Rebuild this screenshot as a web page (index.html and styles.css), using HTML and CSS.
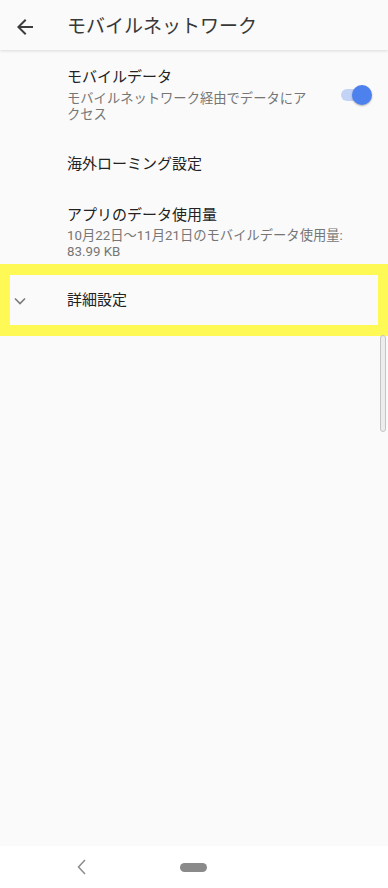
FILE: index.html
```html
<!DOCTYPE html>
<html lang="ja">
<head>
<meta charset="utf-8">
<title>モバイルネットワーク</title>
<link rel="stylesheet" href="styles.css">
</head>
<body>
<div class="screen">
  <header class="appbar">
    <svg class="back" width="24" height="24" viewBox="0 0 24 24" aria-hidden="true"><path d="M20 11H7.83l5.59-5.59L12 4l-8 8 8 8 1.41-1.41L7.83 13H20v-2z"/></svg>
    <h1 class="appbar-title">モバイルネットワーク</h1>
  </header>
  <main class="content">
    <div class="item item-switch">
      <div class="text text-narrow">
        <div class="title">モバイルデータ</div>
        <div class="summary">モバイルネットワーク経由でデータにアクセス</div>
      </div>
      <div class="switch"><span class="track"></span><span class="thumb"></span></div>
    </div>
    <div class="item item-single">
      <div class="title">海外ローミング設定</div>
    </div>
    <div class="item item-usage">
      <div class="text">
        <div class="title">アプリのデータ使用量</div>
        <div class="summary summary-usage">10月22日～11月21日のモバイルデータ使用量: 83.99 KB</div>
      </div>
    </div>
    <div class="highlight">
      <div class="item item-advanced">
        <svg class="chevron" width="12" height="8" viewBox="0 0 12 8" aria-hidden="true"><polyline points="1,1.5 6,6.5 11,1.5"/></svg>
        <div class="title">詳細設定</div>
      </div>
    </div>
    <div class="scrollbar"></div>
  </main>
  <nav class="navbar">
    <svg class="nav-back" width="10" height="16" viewBox="0 0 10 16" aria-hidden="true"><polyline points="8,1 1.5,8 8,15"/></svg>
    <span class="nav-home"></span>
  </nav>
</div>
</body>
</html>
```
FILE: styles.css
```css
html, body {
  margin: 0;
  padding: 0;
}
body {
  background: #fafafa;
  font-family: Roboto, "Noto Sans CJK JP", sans-serif;
  color: #212121;
}
.screen {
  width: 388px;
  height: 888px;
  display: flex;
  flex-direction: column;
  overflow: hidden;
  background: #fafafa;
}
.appbar {
  flex: 0 0 auto;
  box-sizing: border-box;
  height: 50px;
  display: flex;
  align-items: center;
  padding-left: 13px;
  padding-top: 3px;
  background: #fafafa;
  box-shadow: 0 1px 3px rgba(0, 0, 0, 0.13);
  position: relative;
  z-index: 2;
}
.back {
  fill: #3d3d3d;
}
.appbar-title {
  margin: 0 0 0 30px;
  font-size: 19px;
  font-weight: 400;
  line-height: 24px;
  color: #383838;
}
.content {
  flex: 1 1 auto;
  position: relative;
}
.item {
  display: flex;
  align-items: center;
  padding-left: 67px;
}
.title {
  font-size: 15px;
  line-height: 20px;
  color: #222;
}
.summary {
  margin-top: 4px;
  font-size: 13.3px;
  line-height: 15.5px;
  color: #767676;
}
.item-switch {
  padding-top: 17px;
  padding-bottom: 17px;
  padding-right: 16px;
}
.text {
  flex: 1 1 auto;
}
.text-narrow {
  flex: 0 0 245px;
  width: 245px;
}
.switch {
  position: relative;
  width: 31px;
  height: 20px;
  margin-left: 29px;
}
.track {
  position: absolute;
  left: 0;
  top: 4px;
  width: 26px;
  height: 12px;
  border-radius: 6px;
  background: #c3d3f6;
}
.thumb {
  position: absolute;
  left: 11px;
  top: 0;
  width: 20px;
  height: 20px;
  border-radius: 50%;
  background: #4c81ee;
  box-shadow: 0 1px 2px rgba(0, 0, 0, 0.3);
}
.item-single {
  height: 49px;
}
.item-usage {
  padding-top: 17px;
  padding-bottom: 5px;
  padding-right: 16px;
}
.summary-usage {
  margin-top: 3px;
}
.highlight {
  border: 11px solid #fff955;
  border-left-width: 10px;
  border-right-width: 10px;
}
.item-advanced {
  height: 50px;
  padding-left: 4px;
  background: #fafafa;
}
.chevron {
  fill: none;
  stroke: #7a7a7a;
  stroke-width: 1.6;
  margin-right: 41px;
  margin-top: 1px;
}
.scrollbar {
  position: absolute;
  left: 380px;
  top: 285px;
  width: 4px;
  height: 95px;
  border: 1px solid #c4c4c4;
  border-radius: 3px;
  background: #ededed;
}
.navbar {
  flex: 0 0 auto;
  height: 42px;
  background: #ffffff;
  display: flex;
  align-items: center;
  padding-left: 77px;
}
.nav-back {
  fill: none;
  stroke: #8c8c8c;
  stroke-width: 1.5;
  margin-right: 93px;
}
.nav-home {
  width: 27px;
  height: 9px;
  border-radius: 4.5px;
  background: #8a8a8a;
}
```
